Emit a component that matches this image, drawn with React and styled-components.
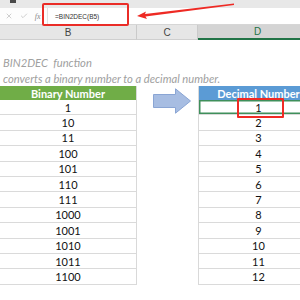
import React from "react";
import styled, { createGlobalStyle } from "styled-components";
import { X, Check } from "lucide-react";

const binary = ["1", "10", "11", "100", "101", "110", "111", "1000", "1001", "1010", "1011", "1100"];
const decimal = binary.map((b) => String(parseInt(b, 2)));

const GlobalStyle = createGlobalStyle`
  html, body {
    margin: 0;
    padding: 0;
    background: #fff;
  }
`;

const Page = styled.div`
  position: relative;
  width: 300px;
  height: 300px;
  overflow: hidden;
  background: #fff;
  font-family: Lato, "Liberation Sans", sans-serif;
`;

const TopStrip = styled.div`
  height: 8px;
  background: #e8e8e8;
  padding-left: 10px;
`;

const SheetTab = styled.div`
  width: 6px;
  height: 3px;
  background: #4a4a4a;
`;

const FormulaBar = styled.div`
  display: flex;
  height: 16px;
  background: #fdfdfd;
  border-bottom: 1px solid #d6d6d6;
`;

const FxTools = styled.div`
  width: 48px;
  display: flex;
  align-items: center;
  justify-content: space-around;
  padding: 0 3px 0 2px;
  box-sizing: border-box;
  color: #8a8a8a;
  border-right: 1px solid #e2e2e2;
  font-size: 8px;
  font-style: italic;
  font-family: "Liberation Serif", serif;

  svg {
    display: block;
  }
`;

const FormulaInput = styled.div`
  flex: 1;
  display: flex;
  align-items: center;
  padding-left: 7px;
  background: #fff;
  font: 6.5px "Liberation Sans", Arial, sans-serif;
  color: #333;
`;

const ColumnHeaders = styled.div`
  display: grid;
  grid-template-columns: 137px 61px 120px;
  height: 15px;
  background: #e6e6e6;
`;

const ColHead = styled.div`
  display: flex;
  align-items: center;
  justify-content: center;
  box-sizing: border-box;
  border-right: 1px solid #cacaca;
  border-bottom: ${(p) => (p.$active ? "2px solid #217346" : "1px solid #cfcfcf")};
  background: ${(p) => (p.$active ? "#d4d4d4" : "#e6e6e6")};
  color: ${(p) => (p.$active ? "#217346" : "#444")};
  font-size: 10px;
  font-family: "Liberation Sans", Arial, sans-serif;
`;

const Sheet = styled.div`
  padding-top: 15px;
`;

const Desc = styled.div`
  padding-left: 3px;
  font-size: 11.2px;
  line-height: 15.5px;
  font-style: italic;
  color: #a0a0a0;
  white-space: pre;
`;

const Tables = styled.div`
  display: grid;
  grid-template-columns: 137px 61px 120px;
`;

const Table = styled.div`
  box-sizing: border-box;
  border-right: ${(p) => (p.$side === "left" ? "1px solid #d9d9d9" : "none")};
  border-left: ${(p) => (p.$side === "right" ? "1px solid #d9d9d9" : "none")};
`;

const Header = styled.div`
  height: 14px;
  display: flex;
  align-items: center;
  justify-content: center;
  background: ${(p) => p.$color};
  color: #fff;
  font-weight: 700;
  font-size: 11px;
`;

const Row = styled.div`
  position: relative;
  height: 15.4px;
  box-sizing: border-box;
  display: flex;
  align-items: center;
  justify-content: center;
  border-bottom: 1px solid #dadada;
  font-size: 11px;
  color: #111;
  box-shadow: ${(p) => (p.$selected ? "inset 0 0 0 1.5px #3f8f5b" : "none")};
`;

const ArrowCell = styled.div`
  padding: 2px 0 0 16px;
`;

const Highlight = styled.div`
  position: absolute;
  top: -2px;
  left: 38px;
  width: 47px;
  height: 20px;
  box-sizing: border-box;
  border: 2px solid #f02a24;
  border-radius: 1px;
`;

const FormulaBox = styled.div`
  position: absolute;
  top: 3px;
  left: 42px;
  width: 87px;
  height: 23px;
  box-sizing: border-box;
  border: 2px solid #ea2c27;
  border-radius: 2px;
`;

const Pointer = styled.svg`
  position: absolute;
  top: 0;
  left: 0;
`;

const BlockArrow = () => (
  <svg width="39" height="26" viewBox="0 0 39 26">
    <polygon
      points="0.5,6.5 22.5,6.5 22.5,0.8 37.5,13 22.5,25.2 22.5,19.5 0.5,19.5"
      fill="#a7bde2"
      stroke="#8aa5d4"
      strokeWidth="1"
    />
  </svg>
);

const App = () => (
  <Page>
    <GlobalStyle />
    <TopStrip>
      <SheetTab />
    </TopStrip>
    <FormulaBar>
      <FxTools>
        <X size={8} strokeWidth={1.4} color="#9a9a9a" />
        <Check size={8} strokeWidth={1.4} color="#9a9a9a" />
        <span>fx</span>
      </FxTools>
      <FormulaInput>=BIN2DEC(B5)</FormulaInput>
    </FormulaBar>
    <ColumnHeaders>
      <ColHead>B</ColHead>
      <ColHead>C</ColHead>
      <ColHead $active>D</ColHead>
    </ColumnHeaders>
    <Sheet>
      <Desc>BIN2DEC  function</Desc>
      <Desc>converts a binary number to a decimal number.</Desc>
      <Tables>
        <Table $side="left">
          <Header $color="#70ad47">Binary Number</Header>
          {binary.map((b) => (
            <Row key={b}>{b}</Row>
          ))}
        </Table>
        <ArrowCell>
          <BlockArrow />
        </ArrowCell>
        <Table $side="right">
          <Header $color="#5b9bd5">Decimal Number</Header>
          {decimal.map((d, i) => (
            <Row key={d} $selected={i === 0}>
              {d}
              {i === 0 && <Highlight />}
            </Row>
          ))}
        </Table>
      </Tables>
    </Sheet>
    <FormulaBox />
    <Pointer width="300" height="30" viewBox="0 0 300 30">
      <polygon points="137,16 146,11.5 145,14 234,3.5 234,5 145.5,16.5 147,19" fill="#ee2a24" />
    </Pointer>
  </Page>
);

export default App;
